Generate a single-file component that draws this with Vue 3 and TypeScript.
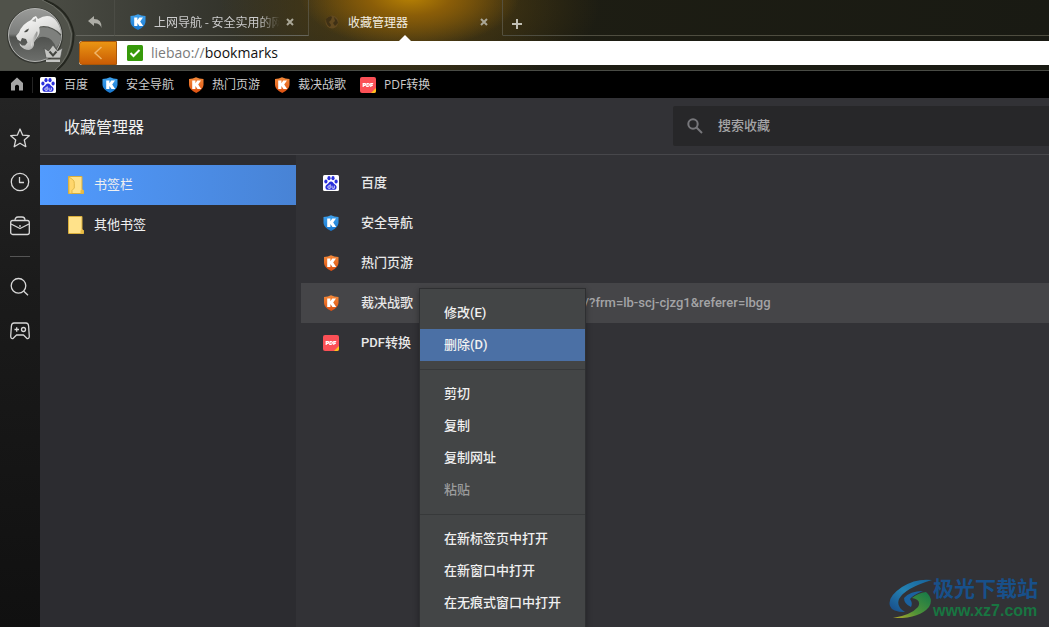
<script setup lang="ts">
import { ref } from 'vue'

interface Bookmark {
  name: string
  icon: string
  url?: string
}
interface MenuEntry {
  label: string
  disabled?: boolean
  current?: boolean
}

const bookmarks: Bookmark[] = [
  { name: '百度', icon: 'i-baidu' },
  { name: '安全导航', icon: 'i-shield-blue' },
  { name: '热门页游', icon: 'i-shield-orange' },
  { name: '裁决战歌', icon: 'i-shield-orange', url: '/?frm=lb-scj-cjzg1&referer=lbgg' },
  { name: 'PDF转换', icon: 'i-pdf' },
]
const folders = ['书签栏', '其他书签']
const selectedFolder = ref(0)
const selectedRow = ref(3)
const address = ref('bookmarks')
const query = ref('')

const menuGroups: MenuEntry[][] = [
  [{ label: '修改(E)' }, { label: '删除(D)', current: true }],
  [{ label: '剪切' }, { label: '复制' }, { label: '复制网址' }, { label: '粘贴', disabled: true }],
  [{ label: '在新标签页中打开' }, { label: '在新窗口中打开' }, { label: '在无痕式窗口中打开' }],
]
</script>

<template>
  <div class="browser">
    <svg class="defs" aria-hidden="true">
      <defs>
        <linearGradient id="g-blue" x1="0" y1="0" x2="0" y2="1">
          <stop offset="0" stop-color="#3fa2ee" /><stop offset="1" stop-color="#1877cf" />
        </linearGradient>
        <linearGradient id="g-orange" x1="0" y1="0" x2="0" y2="1">
          <stop offset="0" stop-color="#f58a3a" /><stop offset="1" stop-color="#dd5010" />
        </linearGradient>
        <symbol id="i-shield-blue" viewBox="0 0 16 16">
          <path d="M.5 2Q5 1.800 8 .2Q11 1.800 15.500 2V8Q15.200 13 8 15.900Q.8 13 .5 8Z" fill="url(#g-blue)" />
          <path d="M4.200 3.500H7.400V6.300L9.300 3.500H13L10.200 7.400L13.200 12H9.500L7.400 8.900V12H4.200Z" fill="#fff" />
        </symbol>
        <symbol id="i-shield-orange" viewBox="0 0 16 16">
          <path d="M1 2Q5 1.800 8 .2Q11 1.800 15.500 2V8Q15.200 13 8.200 15.900Q1.200 13 1 8Z" fill="url(#g-orange)" />
          <path d="M4.200 3.500H7.400V6.300L9.300 3.500H13L10.200 7.400L13.200 12H9.500L7.400 8.900V12H4.200Z" fill="#fff" />
        </symbol>
        <symbol id="i-baidu" viewBox="0 0 16 16">
          <rect width="16" height="16" rx="1.500" fill="#fff" />
          <g fill="#2a2fdc">
            <ellipse cx="2.900" cy="6.500" rx="1.600" ry="1.900" />
            <ellipse cx="6" cy="3.200" rx="1.600" ry="2.100" />
            <ellipse cx="10" cy="3.200" rx="1.600" ry="2.100" />
            <ellipse cx="13.100" cy="6.500" rx="1.600" ry="1.900" />
            <path d="M8 6.500C9.900 6.500 10.300 8.300 11.700 9.300C13.800 10.700 14 12.300 13.200 13.700C12.200 15.300 10 14.700 8 14.700S3.800 15.300 2.800 13.700C2 12.300 2.200 10.700 4.300 9.300C5.700 8.300 6.100 6.500 8 6.500Z" />
          </g>
          <path d="M7.200 9.300V13.300H5.800Q4.800 13.300 4.800 12.100T5.800 10.900H7.200M9 10.700V12.500Q9 13.300 9.800 13.300H11.300V10.700" fill="none" stroke="#fff" stroke-width=".8" />
        </symbol>
        <symbol id="i-pdf" viewBox="0 0 16 16">
          <rect width="16" height="16" rx="2" fill="#fb5056" />
          <path d="M16 11V14Q16 16 14 16H11Z" fill="#ffc21c" />
          <path d="M3.200 10V6.600H4.900Q5.600 6.600 5.600 7.400T4.800 8.400H3.200M7.100 6.600H8.100Q9.500 6.600 9.300 8T7.800 9.500H6.800ZM10.800 10V6.600H13.200M10.800 8.300H12.800" fill="none" stroke="#fff" stroke-width="1.200" />
        </symbol>
        <symbol id="i-folder" viewBox="0 0 16 18">
          <path d="M.5.5H14V13.500L15.500 14.500V17.500H.5Z" fill="#ffe28a" stroke="#d9ae3c" />
          <path d="M12.500 14.500L13.800 13.300L15.500 14.500V17.500H12.500Z" fill="#eabc45" />
        </symbol>
        <symbol id="i-folder-open" viewBox="0 0 16 18">
          <path d="M.5.5H14V13.500L15.500 14.500V17.500H.5Z" fill="#ffe28a" stroke="#d9ae3c" />
          <path d="M.8.800L4.800 3.700Q6.400 5 6.300 7.500V12L4 14.500V17.700H1Z" fill="#ffd66c" stroke="#d9ae3c" stroke-width=".8" />
          <path d="M12.500 14.500L13.800 13.300L15.500 14.500V17.500H12.500Z" fill="#eabc45" />
        </symbol>
      </defs>
    </svg>

    <header class="chrome">
      <button class="logo" type="button" aria-label="主菜单">
        <svg viewBox="0 0 76 70" width="76" height="70">
          <defs>
            <linearGradient id="g-disc" x1="0" y1="0" x2="0" y2="1">
              <stop offset="0" stop-color="#9a9b99" /><stop offset=".48" stop-color="#7c7e7c" />
              <stop offset=".54" stop-color="#50524f" /><stop offset="1" stop-color="#6d6f6c" />
            </linearGradient>
            <linearGradient id="g-head" x1="0" y1="0" x2=".6" y2="1">
              <stop offset="0" stop-color="#fff" /><stop offset=".6" stop-color="#dadad8" /><stop offset="1" stop-color="#a2a3a1" />
            </linearGradient>
            <linearGradient id="g-neck" x1="0" y1="0" x2="1" y2="0">
              <stop offset="0" stop-color="#e0e0de" /><stop offset="1" stop-color="#8b8c8a" />
            </linearGradient>
          </defs>
          <path d="M0 0H44Q69 9 73.500 33Q74 56 57 70H0Z" fill="#50524a" />
          <path d="M44 0Q69 9 73.500 33Q74 56 57 70" fill="none" stroke="#24261f" stroke-width="2" />
          <path d="M42 0Q67 10 71.500 34Q71 57 55 70" fill="none" stroke="#686a62" stroke-width="1" />
          <circle cx="35" cy="35.500" r="28" fill="#343631" />
          <circle cx="35" cy="35" r="26.500" fill="url(#g-disc)" stroke="#b4b5b2" stroke-width="1" />
          <path d="M40 27Q52 27 61 36Q61 43 56 48Q53 38 45 37Q39 36 37 40Q39 33 40 27Z" fill="#7e807d" />
          <path d="M31 20Q33 16.500 36 16L38 19Q50 12 57 22Q61 28 61 35Q55 28 46 27L39 27Q41 33 37 38L34 42L34 45Q33 49 29 50Q24 50 20 45.500L19.500 43L22 45.500L25 45.500L27.500 42.500L26 39L22 38L20.500 41.500L17.500 39.500L16 36L19 32.500Q22 24 31 20Z" fill="url(#g-head)" />
          <path d="M40 27Q51 25 61 35" fill="none" stroke="#555753" stroke-width="1.200" />
          <path d="M37 31Q39 34 34 42L31 47Q31 39 37 31Z" fill="url(#g-neck)" />
          <path d="M24 32Q26 29 29 28.500L28 31Q26 33 24 32Z" fill="#4a4c48" />
          <path d="M32 21L36 18L36 22Z" fill="#a3a4a2" />
          <path d="M44 48L48.500 51L53 45L57.500 51L62.500 48L60.500 58H46Z" fill="#c4c5c2" stroke="#4b4c49" stroke-width=".7" />
          <path d="M49.500 51.500L53 55.500L56.500 51.500" fill="none" stroke="#444641" stroke-width="2" />
          <rect x="46" y="59.500" width="14" height="2.500" fill="#c4c5c2" />
        </svg>
      </button>

      <div class="top">
        <div class="tabs">
          <button class="undo" type="button" aria-label="恢复标签页">
            <svg width="14" height="12" viewBox="0 0 14 12"><path d="M0 5L6 0V3Q14 3 13.500 12Q12 7 6 7.300V10Z" fill="#adada6" /></svg>
          </button>
          <div class="tab">
            <svg class="fav" width="16" height="16"><use href="#i-shield-blue" /></svg>
            <button class="tab-title fade" type="button">上网导航 - 安全实用的网</button>
            <button class="close" type="button" aria-label="关闭">
              <svg width="8" height="8" viewBox="0 0 8 8"><path d="M1 1L7 7M7 1L1 7" /></svg>
            </button>
          </div>
          <div class="tab active">
            <svg class="fav" width="16" height="16" viewBox="0 0 16 16"><circle cx="8" cy="8" r="6.500" fill="#62491f" /><path d="M2 5Q6 1 8 3L7 6L5 8L7 11L6 13Q2 11 2 5M10 3L13 6L14 9L11 12L9 9L11 7Z" fill="#3f3014" /></svg>
            <button class="tab-title" type="button">收藏管理器</button>
            <button class="close" type="button" aria-label="关闭">
              <svg width="8" height="8" viewBox="0 0 8 8"><path d="M1 1L7 7M7 1L1 7" /></svg>
            </button>
          </div>
          <div class="tab-rest">
            <button class="add" type="button" aria-label="新建标签页">
              <svg width="10" height="10" viewBox="0 0 10 10"><path d="M5 0V10M0 5H10" stroke="#c0beb4" stroke-width="2" /></svg>
            </button>
          </div>
        </div>
        <div class="address">
          <button class="back" type="button" aria-label="后退">
            <svg width="10" height="14" viewBox="0 0 10 14"><path d="M8.500 1L2 7L8.500 13" fill="none" stroke="#f0b568" stroke-width="1.500" /></svg>
          </button>
          <svg class="safe" width="16" height="16" viewBox="0 0 16 16"><rect width="16" height="16" rx="1.500" fill="#379a0b" /><path d="M3.500 8L6.500 11L12.500 5" fill="none" stroke="#fff" stroke-width="2" /></svg>
          <label class="scheme" for="address">liebao://</label>
          <input id="address" v-model="address" type="text" spellcheck="false" />
        </div>
      </div>
    </header>

    <nav class="bar">
      <a class="home" href="#" aria-label="主页">
        <svg width="14" height="14" viewBox="0 0 14 14"><path d="M7 .5L13 6V13.500H9V9Q7 6.500 5 9V13.500H1V6Z" fill="#a4a4a4" /></svg>
      </a>
      <a v-for="b in bookmarks" :key="b.name" class="mark" href="#">
        <svg width="16" height="16"><use :href="'#' + b.icon" /></svg>{{ b.name }}
      </a>
    </nav>

    <div class="body">
      <aside class="rail">
        <button type="button" aria-label="收藏"><svg width="20" height="20" viewBox="0 0 20 20"><path d="M10 1L12.700 7.200L19.300 7.700L14.300 12L15.800 18.700L10 15.200L4.200 18.700L5.700 12L.7 7.700L7.300 7.200Z" /></svg></button>
        <button type="button" aria-label="历史"><svg width="20" height="20" viewBox="0 0 20 20"><circle cx="10" cy="10" r="8.700" /><path d="M9.500 5V10.500H14" /></svg></button>
        <button type="button" aria-label="工具箱"><svg width="20" height="20" viewBox="0 0 20 20"><rect x=".7" y="4.500" width="18.600" height="14" rx="2" /><path d="M5 4.500Q5 1 8 1H12Q15 1 15 4.500M1 8L10 12.500L19 8M10 9V11" /></svg></button>
        <hr />
        <button type="button" aria-label="搜索"><svg width="20" height="20" viewBox="0 0 20 20"><circle cx="8.500" cy="8.800" r="7.300" /><path d="M13.800 14.200L18 18.300" /></svg></button>
        <button type="button" aria-label="游戏"><svg width="20" height="20" viewBox="0 0 20 20"><path d="M4 2H16Q18.300 2 18.600 5L19.300 15Q19.300 18 17 17.500L13.500 14H6.500L3 17.500Q.7 18 .7 15L1.400 5Q1.700 2 4 2ZM4.500 8.500H9M6.700 6.200V10.800" /><circle cx="13.500" cy="8.500" r="2" /></svg></button>
      </aside>

      <main class="manager">
        <div class="head">
          <h1>收藏管理器</h1>
          <label class="search">
            <svg width="16" height="16" viewBox="0 0 16 16"><circle cx="6" cy="6" r="4.700" /><path d="M9.500 9.500L15 15" /></svg>
            <input v-model="query" type="text" placeholder="搜索收藏" aria-label="搜索收藏" />
          </label>
        </div>
        <div class="panes">
          <nav class="folders">
            <button v-for="(f, i) in folders" :key="f" type="button" :class="{ on: selectedFolder === i }" @click="selectedFolder = i">
              <svg width="16" height="18"><use :href="selectedFolder === i ? '#i-folder-open' : '#i-folder'" /></svg><span>{{ f }}</span>
            </button>
          </nav>
          <ul class="list">
            <li v-for="(b, i) in bookmarks" :key="b.name" :class="{ on: selectedRow === i }">
              <svg width="16" height="16"><use :href="'#' + b.icon" /></svg>
              <a href="#">{{ b.name }}</a>
              <span v-if="b.url" class="url">{{ b.url }}</span>
              <div v-if="selectedRow === i" class="menu" role="menu">
                <template v-for="(group, g) in menuGroups" :key="g">
                  <hr v-if="g > 0" />
                  <button v-for="m in group" :key="m.label" type="button" role="menuitem" :disabled="m.disabled" :class="{ current: m.current }">{{ m.label }}</button>
                </template>
              </div>
            </li>
          </ul>
        </div>
      </main>
    </div>

    <div class="stamp">
      <svg width="44" height="42" viewBox="0 0 44 42">
        <defs>
          <linearGradient id="g-sw1" x1="1" y1="0" x2="0" y2="1"><stop offset="0" stop-color="#17629a" /><stop offset=".5" stop-color="#2482b3" /><stop offset="1" stop-color="#174987" /></linearGradient>
          <linearGradient id="g-sw2" x1="1" y1="0" x2="0" y2="1"><stop offset="0" stop-color="#137849" /><stop offset=".6" stop-color="#509238" /><stop offset="1" stop-color="#b5aa29" /></linearGradient>
        </defs>
        <path d="M43 2Q27 0 13 9Q-2 19 1 28Q3 34 16 34Q7 29 10 21Q16 10 43 2Z" fill="url(#g-sw1)" />
        <path d="M15 20Q21 13 34 13Q24 17 21 21Q24 25 22 29Q15 26 15 20Z" fill="#1b62a0" />
        <path d="M37 14Q45 21 40 29Q30 41 4 40Q22 37 29 29Q33 22 23 20Q29 15 37 14Z" fill="url(#g-sw2)" />
      </svg>
      <div><strong>极光下载站</strong><span>www.xz7.com</span></div>
    </div>
  </div>
</template>

<style>
body { margin: 0; background: #323236; }
</style>

<style scoped>
* { box-sizing: border-box; }
.browser {
  position: relative;
  display: flex;
  flex-direction: column;
  height: 100vh;
  overflow: hidden;
  color: #f0f0f0;
  font-family: "Noto Sans CJK SC", sans-serif;
  font-size: 13px;
}
button { padding: 0; border: 0; background: none; color: inherit; font: inherit; cursor: pointer; }
a { color: inherit; text-decoration: none; }
svg { display: block; flex: none; }
.defs { position: absolute; width: 0; height: 0; }

.chrome {
  display: flex;
  height: 71px;
  border-bottom: 1px solid #494b45;
  background:
    radial-gradient(ellipse 110px 52px at 410px -4px, #b98304 0%, #8a5d08 38%, transparent 100%),
    radial-gradient(ellipse 190px 90px at 410px 4px, #55400f 0%, transparent 100%),
    linear-gradient(90deg, #50524a 0, #383932 180px, #2b2a1d 320px, #1d1d13 560px, #191a13 100%);
}
.logo { width: 76px; height: 70px; }
.top { flex: 1; min-width: 0; }
.tabs { display: flex; height: 36px; margin-bottom: 5px; }
.undo { display: flex; align-items: center; justify-content: center; width: 39px; padding-top: 8px; border-right: 1px solid #4b4c45; border-bottom: 1px solid #65665f; }
.tab { position: relative; display: flex; align-items: center; width: 194px; padding: 8px 14px 0 15px; border-right: 1px solid #55503d; border-bottom: 1px solid #65655b; }
.tab-title { flex: 1; height: 20px; margin: 0 1px 0 8px; white-space: nowrap; text-align: left; line-height: 20px; color: #ccc; font-size: 12px; }
.fade { -webkit-mask-image: linear-gradient(90deg, #000 80%, transparent 96%); mask-image: linear-gradient(90deg, #000 80%, transparent 96%); }
.tab.active { border-bottom-color: transparent; }
.active .tab-title { color: #f3eee2; }
.tab.active::after { content: ""; position: absolute; left: 90px; bottom: -6px; border: 6px solid transparent; border-top: 0; border-bottom-color: #fff; }
.close svg { stroke: #aaa797; stroke-width: 2; }
.tab-rest { flex: 1; padding: 14px 0 0 9px; border-bottom: 1px solid #4e4d40; }
.add { display: block; height: 20px; }
.address { display: flex; align-items: center; height: 24px; margin-left: 3px; border-radius: 3px 0 0 3px; overflow: hidden; background: #fff; font-family: "Open Sans", sans-serif; font-size: 14px; }
.back { display: flex; align-items: center; justify-content: center; width: 38px; height: 24px; background: linear-gradient(#ea9513, #c95c04); border: 1px solid #a95708; border-radius: 3px 0 0 3px; }
.safe { margin: 0 8px 0 10px; }
.scheme, .address input { padding: 0 0 2px; }
.scheme { color: #7b7b7b; }
.address input { flex: 1; min-width: 0; height: 24px; border: 0; outline: 0; background: none; color: #111; font: inherit; }

.bar { display: flex; align-items: center; height: 27px; background: #000; color: #ccc; font-family: "Open Sans", "Noto Sans CJK SC", sans-serif; font-size: 12px; }
.home { display: flex; justify-content: center; width: 33px; margin-right: 7px; padding: 0 0 2px 2px; border-right: 1px solid #252525; }
.mark { display: flex; align-items: center; gap: 8px; margin-right: 14px; white-space: nowrap; line-height: 18px; }

.body { display: flex; flex: 1; min-height: 0; }
.rail { display: flex; flex-direction: column; align-items: center; gap: 24px; width: 40px; padding-top: 30px; background: linear-gradient(#242424, #1b1b1b 35%, #101010); }
.rail svg { fill: none; stroke: #d8d8d8; stroke-width: 1.300; stroke-linejoin: round; }
.rail hr { width: 20px; height: 1px; margin: -4px 0; border: 0; background: #555; }
.manager { display: flex; flex: 1; flex-direction: column; min-width: 0; background: #323236; }
.head { display: flex; align-items: center; justify-content: space-between; height: 57px; padding-left: 24px; border-bottom: 1px solid #47474b; }
h1 { margin: 0; font-size: 16px; font-weight: 400; line-height: 24px; }
.search { display: flex; align-items: center; gap: 15px; width: 376px; height: 40px; padding-left: 14px; border-radius: 2px 0 0 2px; background: #272729; }
.search svg { fill: none; stroke: #77777b; stroke-width: 2; }
.search input { flex: 1; min-width: 0; padding: 0 0 4px; border: 0; outline: 0; background: none; color: #ccc; font: inherit; font-weight: 500; }
.search input::placeholder { color: #a5a5a7; opacity: 1; }
.panes { display: flex; flex: 1; min-height: 0; }
.folders { width: 256px; padding-top: 10px; background: #2c2c30; }
.folders button { display: flex; align-items: center; gap: 10px; width: 100%; height: 40px; padding-left: 28px; }
.folders span { padding-bottom: 4px; }
.folders button.on { background: linear-gradient(90deg, #519bff, #4883d5); }
.list { flex: 1; min-width: 0; margin: 0; padding: 8px 0 0 5px; list-style: none; font-family: Roboto, "Noto Sans CJK SC", sans-serif; font-weight: 500; }
.list li { position: relative; display: flex; align-items: center; height: 40px; padding-left: 22px; }
.list li.on { background: #454548; }
.list a { margin-left: 22px; padding-bottom: 4px; color: #e8e8e8; }
.url { margin-left: 171px; padding-bottom: 2px; color: #a3a3a5; }
.menu { position: absolute; z-index: 2; top: 5px; left: 118px; width: 167px; padding: 8px 0; border: 1px solid #2e2f31; background: #434546; box-shadow: 0 2px 6px #0005; }
.menu button { display: block; width: 100%; height: 32px; padding: 0 0 4px 24px; text-align: left; color: #f0f0f0; }
.menu button.current { background: #4b70a5; }
.menu button:disabled { color: #9b9c9d; }
.menu hr { height: 1px; margin: 8px 0; border: 0; background: #37393a; }

.stamp { position: absolute; right: 11px; bottom: 6px; display: flex; align-items: center; pointer-events: none; }
.stamp strong { display: block; color: #18508a; font-size: 21px; font-weight: 700; line-height: 20px; padding-bottom: 4px; }
.stamp span { display: block; color: #187541; font: 700 16px/20px "Liberation Sans", sans-serif; }
</style>
